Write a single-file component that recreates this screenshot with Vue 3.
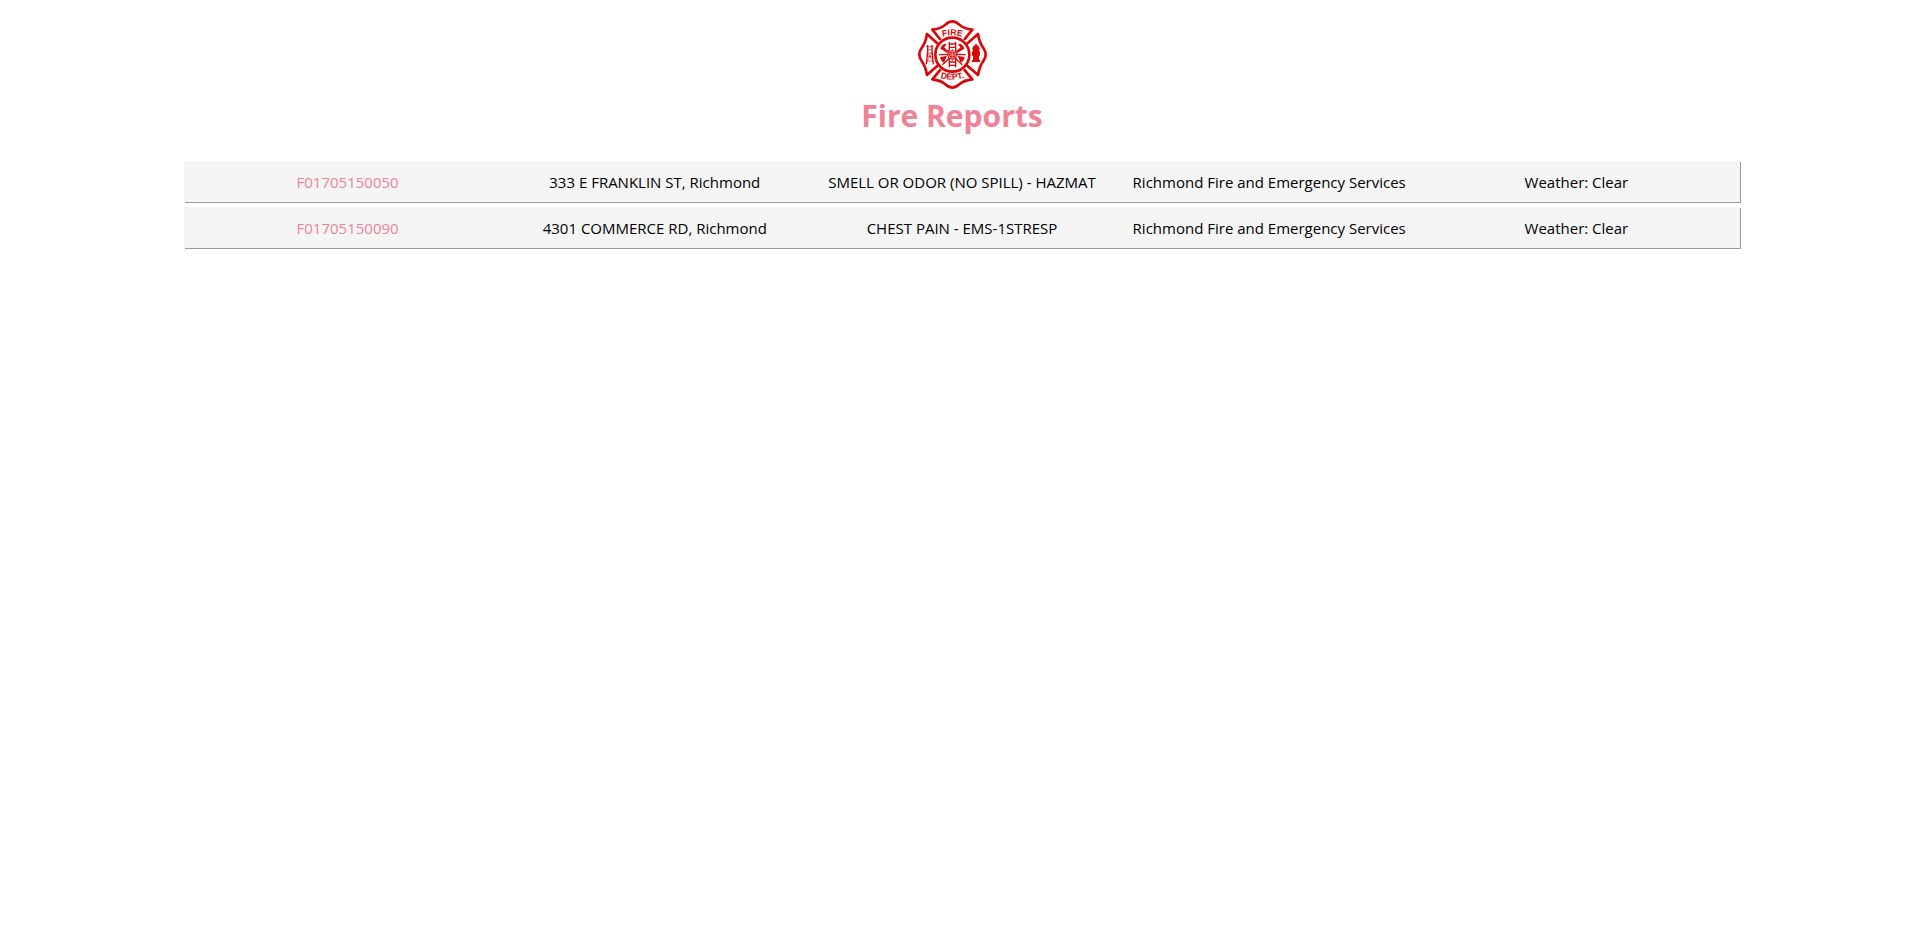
<script setup>
const reports = [
  {
    id: 'F01705150050',
    address: '333 E FRANKLIN ST, Richmond',
    type: 'SMELL OR ODOR (NO SPILL) - HAZMAT',
    department: 'Richmond Fire and Emergency Services',
    weather: 'Clear',
  },
  {
    id: 'F01705150090',
    address: '4301 COMMERCE RD, Richmond',
    type: 'CHEST PAIN - EMS-1STRESP',
    department: 'Richmond Fire and Emergency Services',
    weather: 'Clear',
  },
]
</script>

<template>
  <main class="page">
    <header class="header">
      <svg class="logo" viewBox="18 18 216 216" role="img" aria-label="Fire Dept.">
        <defs>
          <path id="arc-top" d="M60 88 Q127 52 194 88" />
          <path id="arc-bottom" d="M60 184 Q127 222 194 184" />
        </defs>
        <g fill="none" stroke="#d90808" stroke-width="8" stroke-linejoin="round">
          <path d="M92 84 L67 53 Q94 50 106 38 Q127 18 148 38 Q160 50 187 53 L162 84" />
          <path d="M92 172 L67 202 Q94 205 106 217 Q127 237 148 217 Q160 205 187 202 L162 172" />
          <path d="M84 96 L51 66 Q47 92 35 108 Q21 127 35 147 Q47 164 51 189 L84 160" />
          <path d="M170 96 L204 66 Q208 92 220 108 Q234 127 220 147 Q208 164 204 189 L170 160" />
          <circle cx="127" cy="128" r="51" />
        </g>
        <g fill="none" stroke="#d90808" stroke-width="4">
          <path d="M118 90 V166 M137 90 V166 M118 96 H137 M118 106 H137 M118 150 H137 M118 160 H137" />
          <path d="M97 104 L157 158 M157 104 L97 158" />
          <path d="M53 99 V116 L49 157 M66 99 V116 L70 157" />
          <path d="M87 128 L112 127 M142 127 L167 128" />
        </g>
        <g fill="none" stroke="#d90808" stroke-width="2">
          <path d="M49 104 H70 M53 113 H66 M52 123 H67 M51 134 H69 M51 147 H70 M53 123 L69 147 M66 123 L51 147" />
        </g>
        <g fill="#d90808">
          <path d="M91 110 Q96 94 110 95 L102 108 L116 119 L111 122 Z" />
          <path d="M163 110 Q158 94 144 95 L152 108 L138 119 L143 122 Z" />
          <path d="M90 136 L111 131 L102 152 Q92 148 90 136 Z" />
          <path d="M164 136 L143 131 L152 152 Q162 148 164 136 Z" />
          <path d="M127 111 L132 117 L140 114 L139 122 L146 128 L139 133 L140 141 L132 140 L127 146 L122 140 L114 141 L115 133 L108 128 L115 122 L114 114 L122 117 Z" />
          <path d="M188 108 Q189 101 195 100 V97 H201 V100 Q207 101 208 108 H209 V113 H207 V118 H210 V131 H207 V144 H210 V150 H186 V144 H189 V131 H186 V118 H189 V113 H187 V108 Z" />
        </g>
        <g fill="none" stroke="#f8c4c4" stroke-width="2">
          <circle cx="127" cy="128" r="11" />
          <path d="M119 124 L135 132 M119 132 L135 124 M127 117 V139" />
        </g>
        <g class="lettering">
          <text><textPath href="#arc-top" startOffset="50%">FIRE</textPath></text>
          <text><textPath href="#arc-bottom" startOffset="50%">DEPT.</textPath></text>
        </g>
      </svg>
      <h1 class="title">Fire Reports</h1>
    </header>

    <ul class="reports">
      <li v-for="report in reports" :key="report.id" class="report">
        <a class="report-id" href="#">{{ report.id }}</a>
        <span>{{ report.address }}</span>
        <span>{{ report.type }}</span>
        <span>{{ report.department }}</span>
        <span>Weather: {{ report.weather }}</span>
      </li>
    </ul>
  </main>
</template>

<style>
body {
  background: #fff;
}
</style>

<style scoped>
.page {
  box-sizing: border-box;
  min-height: 100vh;
  padding: 18px 8px 16px 0;
  color: #000;
  font-family: "Segoe UI", "Open Sans", "Noto Sans", sans-serif;
  font-size: 15px;
  line-height: 21px;
}

.header {
  display: flex;
  flex-direction: column;
  align-items: center;
}

.logo {
  width: 72px;
  height: 72px;
}

.lettering {
  fill: #d90808;
  font-family: "Liberation Sans", Arial, sans-serif;
  font-size: 26px;
  font-weight: 700;
  text-anchor: middle;
}

.title {
  margin: 4px 0 24px;
  color: #ef8295;
  font-size: 30px;
  font-weight: 700;
  line-height: 43px;
}

.reports {
  display: flex;
  flex-direction: column;
  gap: 5px;
  margin: 0 164px 0 184px;
  padding: 0;
  list-style: none;
}

.report {
  display: grid;
  grid-template-columns: repeat(5, minmax(0, 1fr));
  padding: 11px 10px 9px;
  background: #f5f5f5;
  box-shadow: 1px 1px 0 #999;
  text-align: center;
}

.report-id {
  color: #ef8295;
  text-decoration: none;
}
</style>
